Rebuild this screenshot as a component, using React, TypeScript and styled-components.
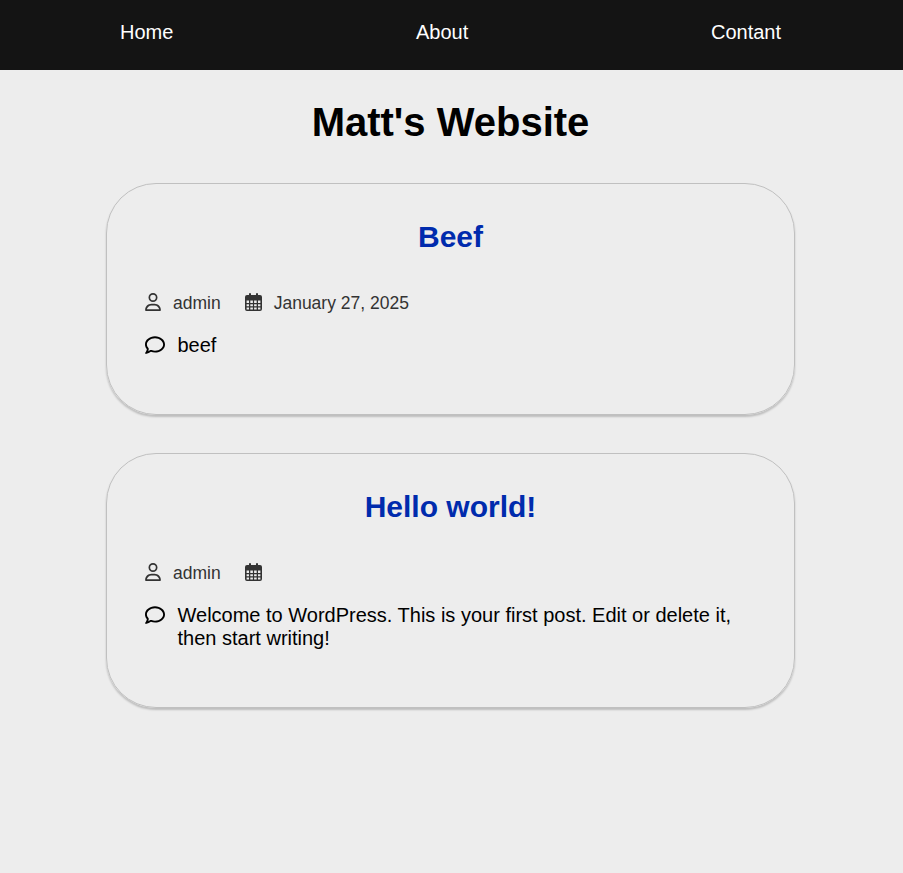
import React from "react";
import styled, { createGlobalStyle } from "styled-components";
import { FaRegUser, FaRegComment } from "react-icons/fa6";

const GlobalStyle = createGlobalStyle`
  * { box-sizing: border-box; }
  body {
    margin: 0;
    min-height: 100vh;
    background: #ededed;
    color: #000;
    font-family: "Liberation Sans", Arial, sans-serif;
    font-size: 20px;
    line-height: 23px;
  }
`;

const Nav = styled.nav`
  display: flex;
  justify-content: space-between;
  height: 70px;
  padding: 21px 122px 0 120px;
  background: #141414;
`;

const NavLink = styled.a`
  color: #fff;
  text-decoration: none;
`;

const SiteTitle = styled.h1`
  margin: 29px 0 38px;
  padding-right: 2px;
  font-size: 40px;
  line-height: 46px;
  text-align: center;
`;

const Posts = styled.main`
  display: flex;
  flex-direction: column;
  gap: 38px;
  width: 689px;
  margin-left: 106px;
`;

const Card = styled.article`
  padding: 36px 38px 57px;
  border: 1px solid #c0c0c0;
  border-radius: 50px;
  box-shadow: 0 2px 2px rgba(0, 0, 0, 0.2);
`;

const PostTitle = styled.h2`
  margin: 0 0 38px;
  color: #002bad;
  font-size: 30px;
  line-height: 34px;
  text-align: center;
`;

const Meta = styled.div`
  display: flex;
  align-items: center;
  gap: 24px;
  height: 22px;
  margin-bottom: 20px;
  color: #333;
  font-size: 17.5px;
`;

const MetaItem = styled.span`
  display: flex;
  align-items: center;
  gap: 12px;
`;

const Excerpt = styled.div`
  display: flex;
  gap: 12.5px;
`;

const Text = styled.p`
  margin: 0;
`;

const UserIcon = styled(FaRegUser)`
  flex: none;
  width: 16px;
  height: 18px;
  margin-bottom: 2px;
`;

const CommentIcon = styled(FaRegComment)`
  flex: none;
  margin-top: 1px;
`;

const CalendarSvg = styled.svg`
  flex: none;
  width: 17px;
  height: 18px;
  margin-bottom: 2px;
`;

const CalendarIcon = () => (
  <CalendarSvg viewBox="0 0 17 18" fill="currentColor">
    <path
      fillRule="evenodd"
      d="M4 1a1 1 0 0 1 2 0v1h5V1a1 1 0 0 1 2 0v1h2a2 2 0 0 1 2 2v12a2 2 0 0 1-2 2H2a2 2 0 0 1-2-2V4a2 2 0 0 1 2-2h2ZM1.600 7.500V10H4V7.500Zm3.700 0V10h2.600V7.500Zm3.800 0V10h2.600V7.500Zm3.900 0V10h2.400V7.500ZM1.600 11.200v2H4v-2Zm3.700 0v2h2.600v-2Zm3.800 0v2h2.600v-2Zm3.900 0v2h2.400v-2ZM1.600 14.400v2H4v-2Zm3.700 0v2h2.600v-2Zm3.800 0v2h2.600v-2Zm3.900 0v2h2.400v-2Z"
    />
  </CalendarSvg>
);

const posts = [
  { title: "Beef", author: "admin", date: "January 27, 2025", text: "beef" },
  {
    title: "Hello world!",
    author: "admin",
    date: "",
    text: "Welcome to WordPress. This is your first post. Edit or delete it, then start writing!",
  },
];

export default function App() {
  return (
    <>
      <GlobalStyle />
      <Nav>
        <NavLink>Home</NavLink>
        <NavLink>About</NavLink>
        <NavLink>Contant</NavLink>
      </Nav>
      <SiteTitle>Matt's Website</SiteTitle>
      <Posts>
        {posts.map((post) => (
          <Card key={post.title}>
            <PostTitle>{post.title}</PostTitle>
            <Meta>
              <MetaItem>
                <UserIcon />
                {post.author}
              </MetaItem>
              <MetaItem>
                <CalendarIcon />
                {post.date}
              </MetaItem>
            </Meta>
            <Excerpt>
              <CommentIcon />
              <Text>{post.text}</Text>
            </Excerpt>
          </Card>
        ))}
      </Posts>
    </>
  );
}
